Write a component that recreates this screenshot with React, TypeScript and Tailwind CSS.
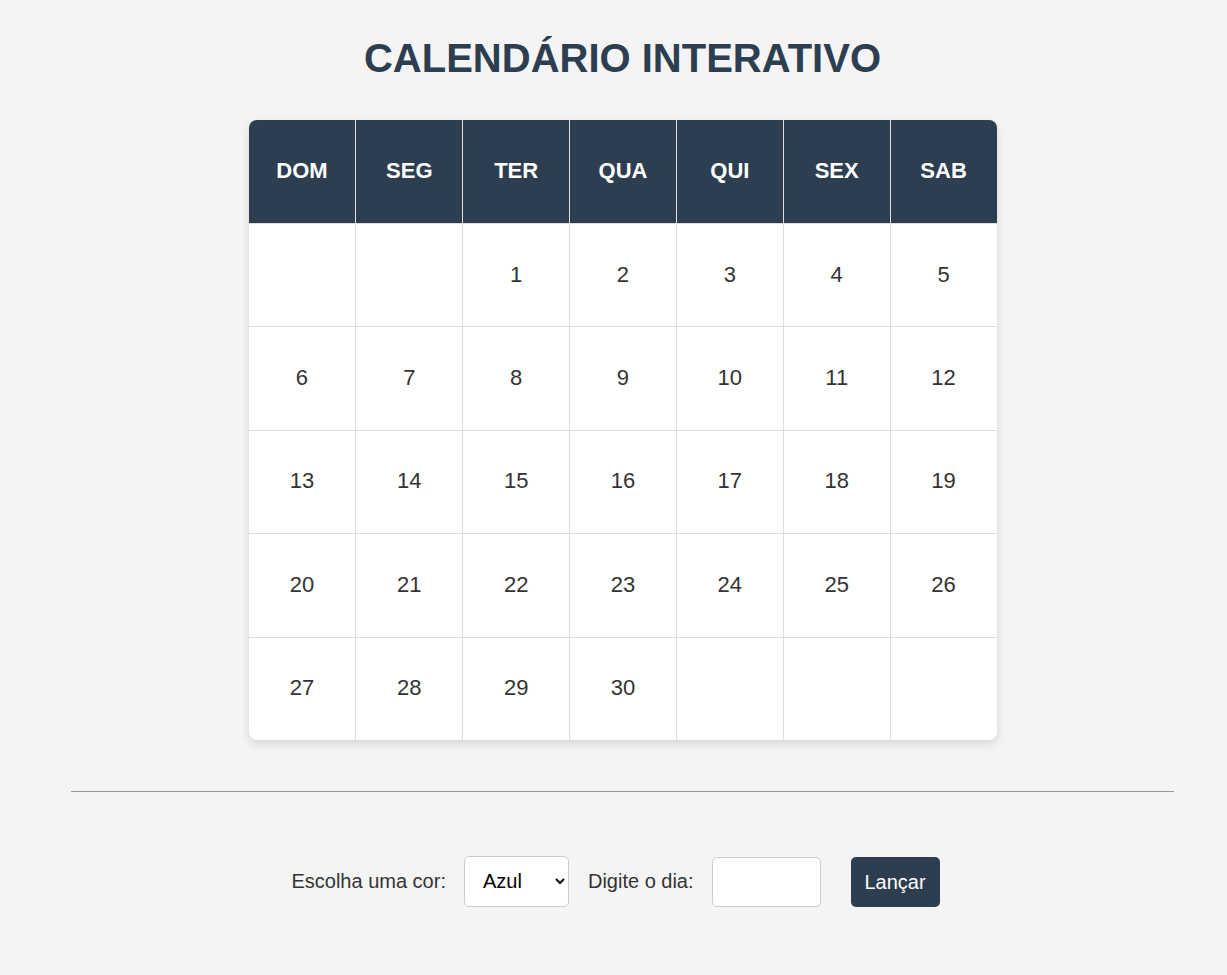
import React from "react";

const days = ["DOM", "SEG", "TER", "QUA", "QUI", "SEX", "SAB"];
const weeks: (number | null)[][] = [
  [null, null, 1, 2, 3, 4, 5],
  [6, 7, 8, 9, 10, 11, 12],
  [13, 14, 15, 16, 17, 18, 19],
  [20, 21, 22, 23, 24, 25, 26],
  [27, 28, 29, 30, null, null, null],
];

export default function App() {
  return (
    <div
      className="min-h-[975px] w-full bg-[#f4f4f4] pl-[18px] pt-[35px]"
      style={{ fontFamily: '"Liberation Sans", Arial, sans-serif' }}
    >
      <h1 className="text-center text-[40px] leading-[46px] font-bold text-[#2c3e50]">
        CALENDÁRIO INTERATIVO
      </h1>

      <div className="mx-auto mt-[39px] w-[748px] overflow-hidden rounded-[8px] bg-white shadow-[0_4px_10px_rgba(0,0,0,0.12)]">
        <div className="grid h-[103px] grid-cols-7 bg-[#2c3e50]">
          {days.map((d, i) => (
            <div
              key={d}
              className={`flex items-center justify-center pb-[2px] text-[22px] font-bold text-white ${
                i > 0 ? "border-l border-[#dddddd]" : ""
              }`}
            >
              {d}
            </div>
          ))}
        </div>
        {weeks.map((w, r) => (
          <div key={r} className="grid h-[103.4px] grid-cols-7 border-t border-[#dddddd]">
            {w.map((n, i) => (
              <div
                key={i}
                className={`flex items-center justify-center pb-[2px] text-[22px] text-[#333333] ${
                  i > 0 ? "border-l border-[#dddddd]" : ""
                }`}
              >
                {n ?? ""}
              </div>
            ))}
          </div>
        ))}
      </div>

      <div className="mx-[53px] mt-[51px] h-px bg-[#999999]" />

      <div className="mt-[64px] flex items-center justify-center pr-[14px] text-[20px] text-[#333333]">
        <label>Escolha uma cor:</label>
        <select
          defaultValue="azul"
          className="ml-[18px] h-[51px] w-[105px] rounded-[5px] border border-[#cccccc] bg-white pl-[14px] pr-[6px] text-[20px] text-black"
        >
          <option value="azul">Azul</option>
          <option value="vermelho">Vermelho</option>
          <option value="verde">Verde</option>
        </select>
        <label className="ml-[19px]">Digite o dia:</label>
        <input
          type="text"
          className="ml-[18px] mt-[1px] h-[50px] w-[109px] rounded-[5px] border border-[#cccccc] bg-white px-[10px] text-[20px]"
        />
        <button className="ml-[30px] mt-[1px] h-[50px] w-[89px] rounded-[5px] bg-[#2c3e50] text-[20px] text-white">
          Lançar
        </button>
      </div>
    </div>
  );
}
